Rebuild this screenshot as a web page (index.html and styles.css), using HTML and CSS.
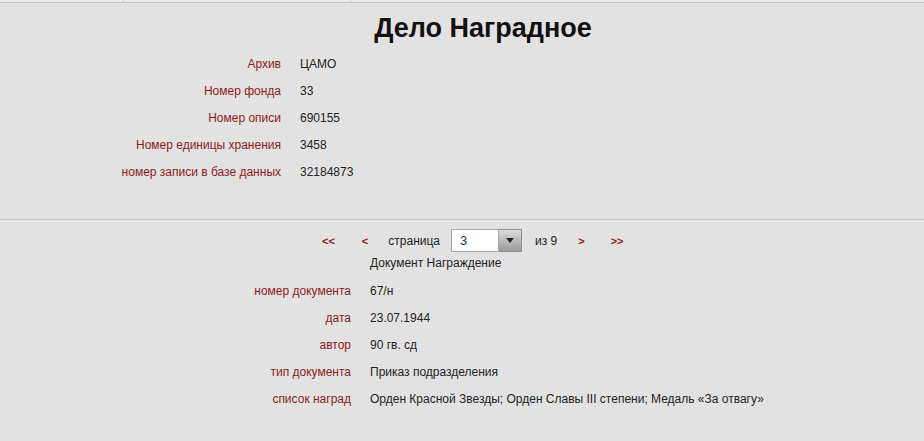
FILE: index.html
```html
<!DOCTYPE html>
<html lang="ru">
<head>
  <meta charset="UTF-8" />
  <title>Дело Наградное</title>
  <link rel="stylesheet" href="styles.css">
</head>
<body>
  <!-- top tab strip -->
  <div class="tabs">
    <div class="tab tab-first"></div>
    <div class="tab tab-second"></div>
    <div class="tab"></div>
  </div>

  <h1 class="title">Дело Наградное</h1>

  <!-- case info -->
  <div class="info info-case">
    <div class="label">Архив</div><div class="value">ЦАМО</div>
    <div class="label">Номер фонда</div><div class="value">33</div>
    <div class="label">Номер описи</div><div class="value">690155</div>
    <div class="label">Номер единицы хранения</div><div class="value">3458</div>
    <div class="label">номер записи в базе данных</div><div class="value">32184873</div>
  </div>

  <div class="divider"></div>

  <!-- pager -->
  <div class="pager">
    <a class="nav nav-first" href="#">&lt;&lt;</a>
    <a class="nav nav-prev" href="#">&lt;</a>
    <span class="page-text">страница</span>
    <div class="page-select">
      <span class="page-value">3</span>
      <span class="page-btn"><span class="arrow"></span></span>
    </div>
    <span class="page-of">из 9</span>
    <a class="nav nav-next" href="#">&gt;</a>
    <a class="nav nav-last" href="#">&gt;&gt;</a>
  </div>

  <div class="doc-title">Документ Награждение</div>

  <!-- document info -->
  <div class="info info-doc">
    <div class="label">номер документа</div><div class="value">67/н</div>
    <div class="label">дата</div><div class="value">23.07.1944</div>
    <div class="label">автор</div><div class="value">90 гв. сд</div>
    <div class="label">тип документа</div><div class="value">Приказ подразделения</div>
    <div class="label">список наград</div><div class="value">Орден Красной Звезды; Орден Славы III степени; Медаль «За отвагу»</div>
  </div>
</body>
</html>
```

FILE: styles.css
```css
body {
  margin: 0;
  font-family: "Liberation Sans", Arial, sans-serif;
  font-size: 12px;
  background-color: #e2e2e2;
  color: #222;
}

.tabs {
  display: flex;
  height: 2px;
  background-color: #e9ebe9;
  border-bottom: 1px solid #c6cac6;
}

.tab-first {
  width: 123px;
  border-right: 1px solid #c6cac6;
}

.tab-second {
  width: 226px;
  border-right: 1px solid #c6cac6;
}

.title {
  margin: 0;
  padding: 9px 0 0 42px;
  height: 35px;
  text-align: center;
  font-size: 27px;
  font-weight: bold;
  color: #111;
  line-height: 32px;
}

.info {
  display: grid;
  grid-auto-rows: 27px;
  column-gap: 19px;
  align-items: center;
}

.info-case {
  grid-template-columns: 281px 1fr;
  margin-top: 3px;
}

.info-doc {
  grid-template-columns: 351px 1fr;
}

.label {
  text-align: right;
  color: #8e1b1b;
}

.value {
  color: #222;
}

.divider {
  margin-top: 34px;
  height: 1px;
  border-top: 1px solid #c4c8c4;
  border-bottom: 1px solid #ededed;
}

.pager {
  display: flex;
  align-items: center;
  height: 23px;
  margin-top: 7px;
  padding-left: 322px;
}

.nav {
  color: #8e1b1b;
  font-weight: bold;
  font-size: 11px;
  text-decoration: none;
}

.nav-first { margin-right: 27px; }
.nav-prev { margin-right: 20px; }
.page-text { margin-right: 11px; }
.page-of { margin: 0 21px 0 13px; }
.nav-next { margin-right: 26px; }

.page-select {
  display: flex;
  height: 23px;
}

.page-value {
  width: 38px;
  padding-left: 8px;
  background-color: #fff;
  border: 1px solid #a9a9a9;
  line-height: 21px;
  font-size: 13px;
  color: #1d3b44;
}

.page-btn {
  width: 22px;
  border: 1px solid #8f8f8f;
  border-left: none;
  background: linear-gradient(#dcdcdc, #9a9a9a);
  display: flex;
  align-items: center;
  justify-content: center;
}

.arrow {
  width: 0;
  height: 0;
  border-left: 4px solid transparent;
  border-right: 4px solid transparent;
  border-top: 5px solid #222;
}

.doc-title {
  padding-left: 370px;
  height: 25px;
  line-height: 22px;
}
```
